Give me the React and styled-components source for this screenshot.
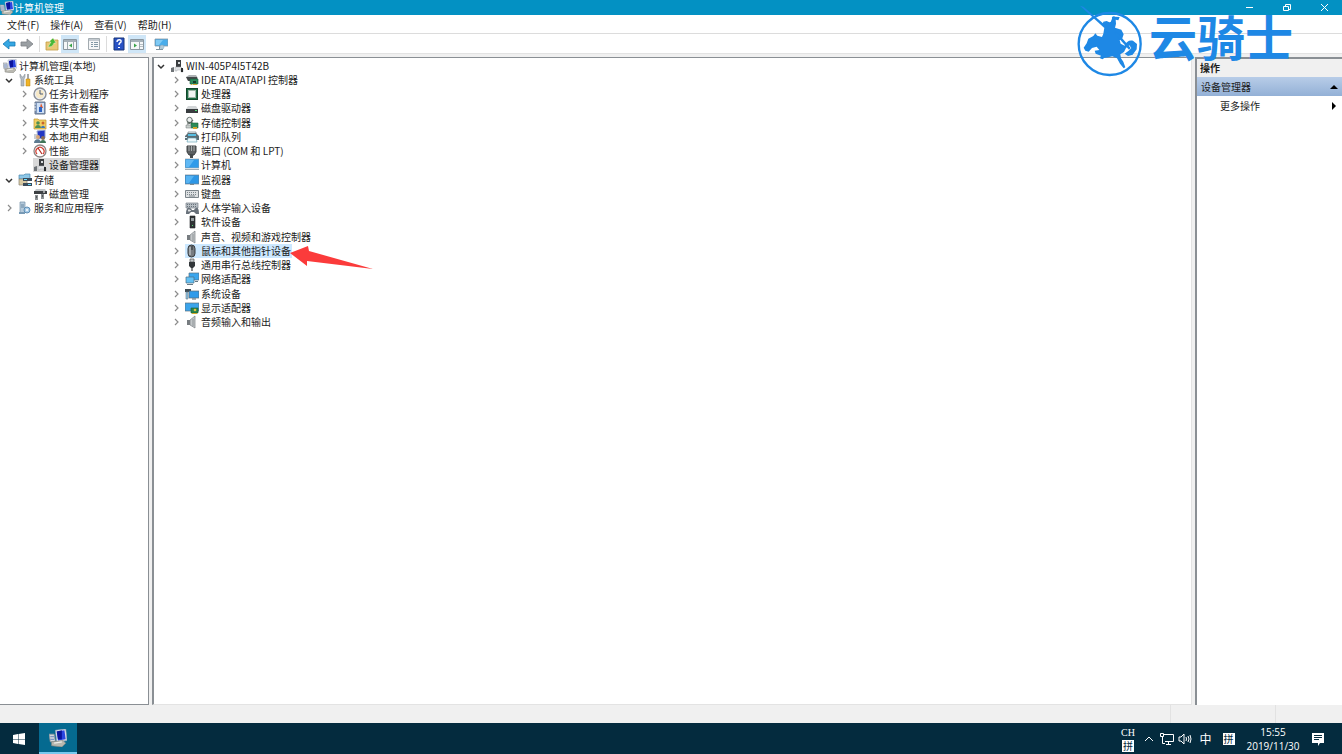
import React, { useState } from "react";
import styled, { createGlobalStyle, css } from "styled-components";

const icons = {
  computer: (
    <>
      <path d="M5 1l8-1 1 9-8 1z" fill="#e4e8f0" stroke="#9aa5bb" strokeWidth=".5" />
      <path d="M6 2l6-1 1 7-6 1z" fill="#2b45e0" />
      <path d="M6 2l4-1v7H7z" fill="#0a149c" />
      <path d="M0 4h4l1 6H1z" fill="#d5d8dc" stroke="#8a9098" strokeWidth=".6" />
      <path d="M1 6h3M1 8h3" stroke="#7e96c4" />
      <path d="M2 10l9-1 2 2-3 3-8-1z" fill="#b9b8b0" stroke="#85857f" strokeWidth=".5" />
      <path d="M4 11l6-1" stroke="#eeeeea" />
    </>
  ),
  tools: (
    <>
      <path d="M2 1v3l1 2v7h3V6l1-2V1L5 4H4z" fill="#b4bcc4" stroke="#7d868f" strokeWidth=".5" />
      <path d="M9 1h2v6H9z" fill="#a8a8a8" />
      <path d="M8 6h4v7H8z" fill="#f0b429" stroke="#b78112" strokeWidth=".5" />
    </>
  ),
  clock: (
    <>
      <circle cx="7" cy="7" r="6" fill="#e9edf2" stroke="#8b8f98" strokeWidth="1.4" />
      <circle cx="7" cy="7" r="4.2" fill="#f7e9c8" />
      <path d="M7 3v4h3" fill="none" stroke="#4b5b76" />
    </>
  ),
  events: (
    <>
      <path d="M2 1h10v12H2z" fill="#7f98bd" stroke="#68768c" />
      <path d="M4 2h7v10H4z" fill="#cfe0f5" />
      <path d="M8 2l2 5H7z" fill="#e2562b" />
      <path d="M6 6h3v5H6z" fill="#2f63c0" />
      <path d="M1 3h2M1 6h2M1 9h2" stroke="#e7ebf0" />
    </>
  ),
  share: (
    <>
      <path d="M1 3h4l1 1h7v9H1z" fill="#f2cf62" stroke="#bd9430" strokeWidth=".7" />
      <circle cx="5" cy="7" r="1.8" fill="#4f8e54" />
      <path d="M2 12c0-4 6-4 6 0z" fill="#4f8e54" />
      <circle cx="10" cy="7" r="1.5" fill="#c7662e" />
      <path d="M8 12c0-3 4-3 4 0z" fill="#3d78b8" />
    </>
  ),
  users: (
    <>
      <path d="M4 1l8-1v8l-7 1z" fill="#2438c4" stroke="#98a6cf" />
      <path d="M1 4h3v5H1z" fill="#c8ccd2" />
      <circle cx="5" cy="7" r="2" fill="#d7a878" />
      <path d="M1 13c0-5 7-5 7 0z" fill="#5d7b91" />
      <circle cx="10" cy="8" r="2" fill="#8c6f55" />
      <path d="M7 13c0-4 6-4 6 0z" fill="#3f7658" />
    </>
  ),
  gauge: (
    <>
      <circle cx="7" cy="7" r="6" fill="#fff" stroke="#8c8585" strokeWidth="1.3" />
      <path d="M4 10a4 4 0 1 1 6 0" fill="none" stroke="#cf3d30" strokeWidth="1.2" />
      <path d="M5 4l4 6" stroke="#b22a20" strokeWidth="1.2" />
    </>
  ),
  device: (
    <>
      <path d="M6 1h5v7H6z" fill="#3a3d40" />
      <path d="M8 3h2v2H8z" fill="#d7dadc" />
      <path d="M1 9l3-1v5H1z" fill="#6f7478" />
      <path d="M5 8h6l2 2v3h-2v-2H7v1H5z" fill="#e2e4e6" stroke="#a5a9ac" strokeWidth=".5" />
      <path d="M11 9h2v4h-2z" fill="#292c2e" />
    </>
  ),
  storage: (
    <>
      <path d="M1 2h5l1-1h5v5H1z" fill="#8cc7e8" stroke="#4a88ad" strokeWidth=".7" />
      <path d="M1 6h8v6H1z" fill="#d9c9a2" stroke="#8a8575" strokeWidth=".7" />
      <path d="M5 5h9v3H5zM5 10h9v3H5z" fill="#3c4b5a" />
      <path d="M6 6h3v1H6zM10 11h3v1h-3z" fill="#67dfff" />
    </>
  ),
  disk: (
    <>
      <path d="M3 2h9l2 3H1z" fill="#c4c8ca" />
      <path d="M1 4h13v3H1z" fill="#3d4144" />
      <path d="M2 8h3v5H2zM8 7h3v5H8z" fill="#8b9093" />
      <path d="M3 10h1M9 9h1" stroke="#222" />
      <path d="M10 5h2" stroke="#fff" />
    </>
  ),
  services: (
    <>
      <path d="M2 1h5v11H2z" fill="#b5cadb" stroke="#7593ab" strokeWidth=".7" />
      <path d="M3 4h3M3 6h3" stroke="#6888a2" />
      <circle cx="9" cy="9" r="3" fill="#a9cbe6" stroke="#5d8eb5" />
      <circle cx="9" cy="9" r="1" fill="#fff" />
      <path d="M1 11h6v2H1z" fill="#789ab5" />
    </>
  ),
  ide: (
    <>
      <path d="M1 4l3-2h7l2 3v2H3z" fill="#aeb3b5" />
      <path d="M1 4h11v4H3z" fill="#45494b" />
      <path d="M5 6h8v5H5z" fill="#2c8c5d" stroke="#1a5f3d" strokeWidth=".6" />
      <path d="M8 8h3v2H8z" fill="#173c2a" />
      <path d="M6 11h1v1H6zM8 11h4v1H8z" fill="#d4aa2d" />
    </>
  ),
  cpu: (
    <>
      <rect x="1.5" y="1.5" width="11" height="11" fill="#1d6b42" stroke="#12472c" />
      <rect x="3.5" y="3.5" width="7" height="7" fill="#f1f4f2" stroke="#9db5a7" />
    </>
  ),
  drive: (
    <>
      <path d="M3 5h8l2 3H1z" fill="#d3d6d8" />
      <path d="M1 8h12v4H1z" fill="#383c3f" />
      <path d="M10 9h2v1h-2z" fill="#54dc78" />
    </>
  ),
  controller: (
    <>
      <circle cx="4.5" cy="4" r="2.7" fill="#edf0f0" stroke="#65706c" />
      <path d="M2 6l6 1M2 8c3 0 4-1 6-4" fill="none" stroke="#596560" strokeWidth="1.2" />
      <path d="M6 7h7v5H6z" fill="#2c8b58" stroke="#1b6139" strokeWidth=".6" />
      <path d="M1 9h5v3H1z" fill="#c8cecb" stroke="#6f7774" strokeWidth=".5" />
      <path d="M8 11h4v2H8z" fill="#d3a52e" />
    </>
  ),
  printer: (
    <>
      <path d="M3 2h8v3H3z" fill="#eef6f8" stroke="#718087" strokeWidth=".7" />
      <path d="M0 6l3-3h8l3 3v4H0z" fill="#5c6e76" />
      <path d="M3 4h8v2H3z" fill="#58bfe3" />
      <path d="M3 8h8l1 4H2z" fill="#eef9fc" stroke="#5d9cae" strokeWidth=".6" />
      <path d="M0 7h2v1H0z" fill="#d9f4ff" />
    </>
  ),
  port: (
    <>
      <path d="M2 2h9v6l-2 3H4L2 8z" fill="#5b5f61" stroke="#3f4345" />
      <path d="M4 2v5M6.5 2v5M9 2v5" stroke="#a9adaf" />
      <path d="M5 10h3v4H5z" fill="#45494b" />
    </>
  ),
  desktop: (
    <>
      <path d="M0 1h14v9H0z" fill="#2f9bea" stroke="#9aa7b0" strokeWidth=".7" />
      <path d="M1 2h8L4 9H1z" fill="#5fb8f4" />
      <path d="M0 11h14v1H0z" fill="#a3adb4" />
    </>
  ),
  monitor: (
    <>
      <path d="M0 2h14v9H0z" fill="#2d97e6" stroke="#74838d" strokeWidth=".7" />
      <path d="M1 3h8l-5 7H1z" fill="#56b3f2" />
      <path d="M5 11h4v1H5z" fill="#7c8990" />
    </>
  ),
  keyboard: (
    <>
      <path d="M.5 3.5h13v7H.5z" fill="#dde0e2" stroke="#7c858b" />
      <path d="M2 5.5h10M2 7.5h10" stroke="#7c858b" strokeDasharray="1 1" />
      <path d="M4 9h6" stroke="#7c858b" />
    </>
  ),
  hid: (
    <>
      <path d="M1 2h12v5H1z" fill="#b7bec4" stroke="#78828a" strokeWidth=".7" />
      <path d="M2 3.5h10M2 5.5h10" stroke="#68737b" strokeDasharray="1 1" />
      <path d="M1 13c0-8 4-7 6-4h2c2-3 5-4 5 4h-3l-2-2H6l-2 2z" fill="#68717a" />
      <path d="M4 8v3M3 9.5h3" stroke="#fff" strokeWidth=".7" />
    </>
  ),
  software: (
    <>
      <path d="M5 1h5v12H5z" fill="#303436" stroke="#202325" strokeWidth=".6" />
      <path d="M6 3h3v3H6z" fill="#949b9f" />
      <path d="M7 10h1v1H7z" fill="#55d271" />
    </>
  ),
  speaker: (
    <>
      <path d="M2 5h3v5H2z" fill="#777c80" />
      <path d="M5 5l5-4v12l-5-3z" fill="#c3c7c9" stroke="#7b8185" strokeWidth=".7" />
      <path d="M8 4v7" stroke="#8f9598" />
    </>
  ),
  mouse: (
    <>
      <rect x="3" y="1" width="7" height="12" rx="3.5" fill="#777c81" stroke="#373b3e" />
      <path d="M5 3v8" stroke="#d4d8db" />
      <path d="M7 2v4" stroke="#292c2e" />
    </>
  ),
  usb: (
    <>
      <path d="M5 1h4v3H5z" fill="#c5c9cb" stroke="#505558" strokeWidth=".7" />
      <path d="M4 4h6v4l-2 2H6L4 8z" fill="#33373a" />
      <path d="M7 10v3" stroke="#55595b" strokeWidth="1.4" />
    </>
  ),
  network: (
    <>
      <path d="M4 1h10v7H4z" fill="#3aa6ee" stroke="#5a7485" strokeWidth=".7" />
      <path d="M1 5h8v6H1z" fill="#64c1f4" stroke="#4a6d82" strokeWidth=".7" />
      <path d="M2 12.5h6M10 9.5h3" stroke="#667985" />
    </>
  ),
  system: (
    <>
      <path d="M0 2h6v3H0z" fill="#3e4b52" />
      <path d="M4 4h10v7H4z" fill="#2f9bea" stroke="#596a75" strokeWidth=".7" />
      <path d="M1 5h2v7H1z" fill="#8ec6e8" stroke="#697780" strokeWidth=".6" />
      <path d="M7 12h4" stroke="#596a75" />
    </>
  ),
  display: (
    <>
      <path d="M0 2h14v8H0z" fill="#3ba4eb" stroke="#5d707d" strokeWidth=".7" />
      <path d="M6 7h7v5H6z" fill="#28854c" stroke="#1c5e34" strokeWidth=".6" />
      <path d="M7 12.5h5" stroke="#d5aa2b" />
      <circle cx="10" cy="9" r="1.3" fill="#e5c041" />
    </>
  ),
  back: <path d="M1 7l6-5v3h6v4H7v3z" fill="#35a7e3" stroke="#1779b4" strokeWidth=".8" />,
  forward: <path d="M13 7L7 2v3H1v4h6v3z" fill="#9a9fa3" stroke="#7d8286" strokeWidth=".8" />,
  folder: (
    <>
      <path d="M1 5h4l1-2h7v10H1z" fill="#e9c877" stroke="#c29c43" strokeWidth=".8" />
      <path d="M3 10c1-2 2-3 3-5H4l4-4 3 5H9c-1 3-3 4-6 4z" fill="#48b838" stroke="#f3f7d8" strokeWidth=".4" />
    </>
  ),
  pane: (
    <>
      <path d="M.5 2.5h13v10H.5z" fill="#f5f7f8" stroke="#8a969f" />
      <path d="M1 4h12" stroke="#a5b0b8" strokeWidth="2" />
      <path d="M4.5 5v7M10.5 5v7" stroke="#9ca7ae" />
      <path d="M6 8.5l3-2v4z" fill="#3aa348" />
    </>
  ),
  actionPane: (
    <>
      <path d="M.5 2.5h13v10H.5z" fill="#f5f7f8" stroke="#8a969f" />
      <path d="M1 4h12" stroke="#a5b0b8" strokeWidth="2" />
      <path d="M9.5 5v7" stroke="#9ca7ae" />
      <path d="M10 7.5h3M10 9.5h3" stroke="#b5bec4" />
      <path d="M7 8.5l-3-2v4z" fill="#3aa348" />
    </>
  ),
  props: (
    <>
      <path d="M1.5 1.5h11v11h-11z" fill="#f5f6f7" stroke="#a3abb0" />
      <path d="M2 3h10" stroke="#c3cad0" strokeWidth="2" />
      <path d="M4 5.5h2M7 5.5h4M4 7.5h2M7 7.5h4M4 9.5h2M7 9.5h4" stroke="#8298a5" />
    </>
  ),
  help: (
    <>
      <path d="M2 1h10v12H2z" fill="#2852c5" stroke="#173477" />
      <path d="M5 5c0-3 5-3 4 0-1 1-2 1-2 3" fill="none" stroke="#fff" strokeWidth="1.4" />
      <path d="M6 10h2v1H6z" fill="#fff" />
    </>
  ),
  screen: (
    <>
      <path d="M1 2h13v7H1z" fill="#49adeb" stroke="#8698a4" strokeWidth=".8" />
      <path d="M2 3h7L5 8H2z" fill="#7fcaf4" />
      <path d="M2 12.5h7M5.5 9v3" stroke="#7c919e" />
      <circle cx="8" cy="10" r="2" fill="#b4cbd8" stroke="#7fa6bd" strokeWidth=".5" />
    </>
  ),
};

const Icon = ({ name, size = 14 }) => (
  <svg width={size} height={size} viewBox="0 0 14 14" aria-hidden="true">
    {icons[name]}
  </svg>
);

const managementTree = [
  { level: 0, icon: "computer", text: "计算机管理(本地)" },
  { level: 1, icon: "tools", text: "系统工具", state: "open" },
  { level: 2, icon: "clock", text: "任务计划程序", state: "closed" },
  { level: 2, icon: "events", text: "事件查看器", state: "closed" },
  { level: 2, icon: "share", text: "共享文件夹", state: "closed" },
  { level: 2, icon: "users", text: "本地用户和组", state: "closed" },
  { level: 2, icon: "gauge", text: "性能", state: "closed" },
  { level: 2, icon: "device", text: "设备管理器" },
  { level: 1, icon: "storage", text: "存储", state: "open" },
  { level: 2, icon: "disk", text: "磁盘管理" },
  { level: 1, icon: "services", text: "服务和应用程序", state: "closed" },
];

const deviceTree = [
  { level: 1, icon: "device", text: "WIN-405P4I5T42B", state: "open" },
  ...[
    ["ide", "IDE ATA/ATAPI 控制器"],
    ["cpu", "处理器"],
    ["drive", "磁盘驱动器"],
    ["controller", "存储控制器"],
    ["printer", "打印队列"],
    ["port", "端口 (COM 和 LPT)"],
    ["desktop", "计算机"],
    ["monitor", "监视器"],
    ["keyboard", "键盘"],
    ["hid", "人体学输入设备"],
    ["software", "软件设备"],
    ["speaker", "声音、视频和游戏控制器"],
    ["mouse", "鼠标和其他指针设备"],
    ["usb", "通用串行总线控制器"],
    ["network", "网络适配器"],
    ["system", "系统设备"],
    ["display", "显示适配器"],
    ["speaker", "音频输入和输出"],
  ].map(([icon, text]) => ({ level: 2, icon, text, state: "closed" })),
];

const Tree = ({ items, initial, tone, pointer, label }) => {
  const [selected, setSelected] = useState(initial);
  return (
    <TreeList aria-label={label}>
      {items.map(({ level, icon, text, state }) => (
        <TreeRow key={text} $level={level}>
          {level > 0 && (
            <Expander $open={state === "open"} aria-label={text} disabled={!state}>
              {state && (
                <svg width="8" height="8" viewBox="0 0 8 8">
                  <path d={state === "open" ? "M1 3l3 3 3-3" : "M3 1l3 3-3 3"} />
                </svg>
              )}
            </Expander>
          )}
          <TreeLabel
            $tone={selected === text ? tone : "transparent"}
            onClick={() => setSelected(text)}
          >
            <Icon name={icon} />
            {text}
            {pointer === text && (
              <Pointer viewBox="0 0 84 26">
                <path d="M0 8L18 1L19 6L83 24L17 16L17 21Z" />
              </Pointer>
            )}
          </TreeLabel>
        </TreeRow>
      ))}
    </TreeList>
  );
};

// knight on horseback inside a ring, next to the wordmark
const Brand = () => (
  <BrandMark>
    <svg width="70" height="75" viewBox="5 1 210 225" aria-hidden="true">
      <circle cx="109" cy="124" r="93" fill="none" stroke="currentColor" strokeWidth="7" />
      <path d="M20 9l10 3 68 57-5 7z" />
      <path d="M112 58l4-10c-2-6 4-9 9-6l14 1-4 10-8-2 1 12-3 12 19 6 7 14-4 12-8 6 3 10 12 6c4-12 14-18 25-15l12 10-1 16-12 16-14 4-10-7 12-9 8-8-6-8-10 8-6 12-11 7 2 12 7 10 6 17-5 3-11-14-9-16-14-6-12 3-12 2-6 4-8-4 4-7-16-6-3-9 14-2-8-10-14 4-10 11-10-3-5-9 9-13 5-14 15-8 6-8 6 7 14 4 4-10 3-18-5-10 2-8 10-2 8 4z" />
      <path d="M128 86l44 50-5 5-44-50z" />
    </svg>
    <span>云骑士</span>
  </BrandMark>
);

const App = () => {
  return (
    <>
      <GlobalStyle />
      <Desktop>
        <TitleBar>
          <Icon name="computer" />
          <h1>计算机管理</h1>
          <WindowButton aria-label="最小化">
            <svg width="10" height="10" viewBox="0 0 10 10">
              <path d="M1 4.5h7" />
            </svg>
          </WindowButton>
          <WindowButton aria-label="还原">
            <svg width="10" height="10" viewBox="0 0 10 10">
              <path d="M1.5 3.5h5v4h-5zM3.5 3V1.5h5v5H7" />
            </svg>
          </WindowButton>
          <WindowButton aria-label="关闭">
            <svg width="10" height="10" viewBox="0 0 10 10">
              <path d="M2 1l7 7M9 1L2 8" />
            </svg>
          </WindowButton>
        </TitleBar>
        <MenuBar>
          {["文件(F)", "操作(A)", "查看(V)", "帮助(H)"].map((item) => (
            <button key={item}>{item}</button>
          ))}
        </MenuBar>
        <ToolBar>
          <Tool aria-label="后退"><Icon name="back" /></Tool>
          <Tool aria-label="前进"><Icon name="forward" /></Tool>
          <Divider />
          <Tool aria-label="向上"><Icon name="folder" /></Tool>
          <Tool aria-label="控制台树" $active><Icon name="pane" /></Tool>
          <Gap />
          <Tool aria-label="属性"><Icon name="props" /></Tool>
          <Divider />
          <Tool aria-label="帮助"><Icon name="help" /></Tool>
          <Tool aria-label="操作窗格" $active><Icon name="actionPane" /></Tool>
          <Gap />
          <Tool aria-label="扫描"><Icon name="screen" /></Tool>
        </ToolBar>
        <Workspace>
          <Pane>
            <Tree
              items={managementTree}
              initial="设备管理器"
              tone="#d9d9d9"
              label="控制台树"
            />
          </Pane>
          <Pane $main>
            <Tree
              items={deviceTree}
              initial="鼠标和其他指针设备"
              pointer="鼠标和其他指针设备"
              tone="#cce8ff"
              label="设备"
            />
          </Pane>
          <Actions>
            <h2>操作</h2>
            <ActionRow $heading>
              设备管理器
              <svg width="8" height="8" viewBox="0 0 8 8">
                <path d="M0 6l4-4 4 4z" />
              </svg>
            </ActionRow>
            <ActionRow>
              更多操作
              <svg width="8" height="8" viewBox="0 0 8 8">
                <path d="M2 0l4 4-4 4z" />
              </svg>
            </ActionRow>
          </Actions>
        </Workspace>
        <StatusBar>
          <span />
          <span />
        </StatusBar>
        <TaskBar>
          <TaskButton aria-label="开始">
            <svg width="12" height="12" viewBox="0 0 12 12" fill="#fff">
              <path d="M0 2l5-1v5H0zM5.5 1l6.500-1v6H5.500zM0 6.500h5V11l-5-1zM5.500 6.500H12V12l-6.500-1z" />
            </svg>
          </TaskButton>
          <TaskButton aria-label="计算机管理" $active>
            <Icon name="computer" size={18} />
          </TaskButton>
          <Tray>
            <Language>
              <span>CH</span>
              <Ime>拼</Ime>
            </Language>
            <TrayButton aria-label="显示隐藏的图标">
              <svg width="10" height="10" viewBox="0 0 10 10">
                <path d="M1 7l4-4 4 4" />
              </svg>
            </TrayButton>
            <TrayButton aria-label="网络">
              <svg width="14" height="14" viewBox="0 0 14 14">
                <path d="M4 2.5h9.5v7H5M8.5 10v2M6 12.500h5M.5 1.500h3v3h-3zM2.500 5v6.500H5" />
              </svg>
            </TrayButton>
            <TrayButton aria-label="音量">
              <svg width="14" height="14" viewBox="0 0 14 14">
                <path d="M1 5h2l3-3v10L3 9H1zM8 5q1 2 0 4M10 4q2 3 0 6M12 3q2 4 0 8" />
              </svg>
            </TrayButton>
            <TrayButton $wide>中</TrayButton>
            <TrayButton $wide aria-label="拼音">
              <Ime>拼</Ime>
            </TrayButton>
            <Clock>
              <span>15:55</span>
              <span>2019/11/30</span>
            </Clock>
            <TrayButton $wide $solid aria-label="通知">
              <svg width="14" height="14" viewBox="0 0 14 14">
                <path d="M1 1h12v10H9l-2 3v-3H1zM3 3v1h8V3zM3 5v1h8V5zM3 7v1h5V7z" />
              </svg>
            </TrayButton>
          </Tray>
        </TaskBar>
        <Brand />
      </Desktop>
    </>
  );
};

const GlobalStyle = createGlobalStyle`
  * {
    box-sizing: border-box;
  }
  body {
    margin: 0;
  }
  body,
  button {
    font-family: "Noto Sans CJK SC", "Open Sans", sans-serif;
    font-size: 10px;
    line-height: 14px;
    color: #1c1c1c;
  }
  button {
    padding: 0;
    border: 0;
    background: transparent;
    white-space: nowrap;
  }
  h1,
  h2,
  ul {
    margin: 0;
    padding: 0;
  }
  svg {
    flex: none;
    display: block;
  }
`;

const Desktop = styled.div`
  position: relative;
  display: flex;
  flex-direction: column;
  min-height: 100vh;
  overflow: hidden;
  background: #f0f0f0;
`;

const TitleBar = styled.header`
  display: flex;
  align-items: center;
  height: 15px;
  background: #0391c3;
  h1 {
    flex: 1;
    font-size: 10px;
    font-weight: 400;
    color: #fff;
  }
`;

const WindowButton = styled.button`
  display: flex;
  justify-content: center;
  width: 37px;
  path {
    fill: none;
    stroke: #fff;
  }
`;

const MenuBar = styled.nav`
  display: flex;
  align-items: flex-end;
  gap: 11px;
  height: 19px;
  padding: 0 0 1px 7px;
  background: #fff;
  border-bottom: 1px solid #dcdcdc;
`;

const ToolBar = styled.div`
  display: flex;
  align-items: center;
  height: 20px;
  background: #fff;
  border-bottom: 1px solid #e3e3e3;
`;

const Tool = styled.button`
  display: flex;
  align-items: center;
  justify-content: center;
  width: 18px;
  height: 18px;
  ${(p) =>
    p.$active &&
    css`
      background: #cfe6f7;
    `}
`;

const Divider = styled.span`
  width: 1px;
  height: 16px;
  margin: 0 3px;
  background: #dcdcdc;
`;

const Gap = styled.span`
  width: 6px;
`;

const Workspace = styled.main`
  flex: 1;
  display: grid;
  grid-template-columns: 149px 1fr 147px;
  gap: 3px;
  padding-top: 3px;
`;

const Pane = styled.section`
  padding: 1px 0 0 3px;
  background: #fff;
  border: 1px solid #8a8f94;
  border-left: 0;
  ${(p) =>
    p.$main &&
    css`
      padding-left: 1px;
      border-left: 2px solid #8a8f94;
      border-right-color: #e3e3e3;
      border-bottom-color: #e3e3e3;
    `}
`;

const TreeList = styled.ul`
  list-style: none;
`;

const TreeRow = styled.li`
  display: flex;
  align-items: center;
  gap: 3px;
  height: 14px;
  padding-left: ${(p) => (p.$level > 1 ? 15 : 0)}px;
  &:nth-child(4n) {
    margin-bottom: 1px;
  }
`;

const Expander = styled.button`
  display: flex;
  justify-content: center;
  width: 12px;
  path {
    fill: none;
    stroke: ${(p) => (p.$open ? "#333" : "#8c8c8c")};
    stroke-width: ${(p) => (p.$open ? 1.5 : 1.2)};
  }
`;

const TreeLabel = styled.button`
  position: relative;
  display: flex;
  align-items: center;
  gap: 2px;
  height: 14px;
  padding-right: 1px;
  background: ${(p) => p.$tone};
`;

const Pointer = styled.svg`
  position: absolute;
  left: 100%;
  top: 1px;
  width: 84px;
  height: 26px;
  margin-left: -2px;
  fill: #fb3b3b;
`;

const Actions = styled.aside`
  background: #fff;
  border-top: 2px solid #8a8f94;
  border-left: 2px solid #8a8f94;
  h2 {
    height: 18px;
    padding-left: 3px;
    font-size: 10px;
    line-height: 18px;
    background: #f0f0f0;
  }
`;

const ActionRow = styled.button`
  display: flex;
  align-items: center;
  justify-content: space-between;
  width: 100%;
  height: 19px;
  padding: 0 4px 0 23px;
  ${(p) =>
    p.$heading &&
    css`
      padding-left: 4px;
      background: linear-gradient(#b8cde8, #93b0d6);
    `}
`;

const StatusBar = styled.footer`
  display: flex;
  justify-content: flex-end;
  height: 18px;
  span {
    width: 105px;
    border-left: 1px solid #e2e2e2;
  }
  span:last-child {
    width: 67px;
  }
`;

const TaskBar = styled.footer`
  display: flex;
  gap: 1px;
  height: 31px;
  background: #042b3e;
`;

const TaskButton = styled.button`
  display: flex;
  align-items: center;
  justify-content: center;
  width: 38px;
  ${(p) =>
    p.$active &&
    css`
      background: #056a90;
      border-bottom: 2px solid #76c9ef;
    `}
`;

const Tray = styled.div`
  display: flex;
  align-items: center;
  margin-left: auto;
  padding-right: 13px;
  color: #fff;
`;

const TrayButton = styled.button`
  display: flex;
  align-items: center;
  justify-content: center;
  width: ${(p) => (p.$wide ? 23 : 18)}px;
  font-size: 12px;
  color: #fff;
  path {
    fill: ${(p) => (p.$solid ? "#fff" : "none")};
    fill-rule: evenodd;
    stroke: ${(p) => (p.$solid ? "none" : "#fff")};
  }
`;

const Language = styled.div`
  display: flex;
  flex-direction: column;
  align-items: center;
  width: 24px;
  font-family: "Liberation Serif", serif;
`;

const Ime = styled.span`
  width: 12px;
  height: 12px;
  font-family: "Noto Sans CJK SC", sans-serif;
  font-size: 10px;
  line-height: 12px;
  text-align: center;
  color: #042b3e;
  background: #fff;
`;

const Clock = styled.time`
  display: flex;
  flex-direction: column;
  align-items: center;
  width: 66px;
  font-family: "Open Sans", sans-serif;
`;

const BrandMark = styled.div`
  position: absolute;
  top: 3px;
  right: 49px;
  display: flex;
  align-items: flex-start;
  gap: 4px;
  color: #1e88e5;
  pointer-events: none;
  svg {
    fill: currentColor;
  }
  span {
    padding-top: 8px;
    font-size: 48px;
    font-weight: 700;
    line-height: 48px;
  }
`;

export default App;
